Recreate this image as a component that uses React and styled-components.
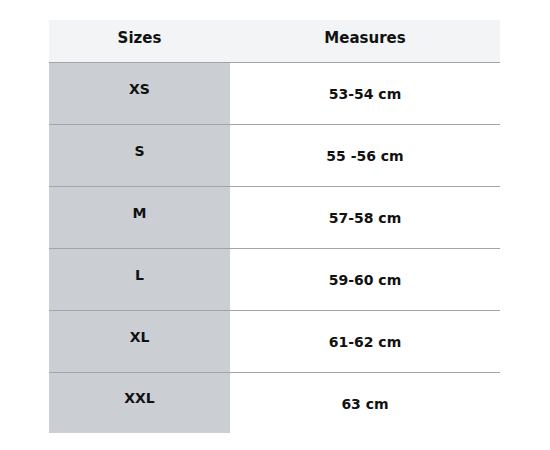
import React from "react";
import styled, { createGlobalStyle } from "styled-components";

const Global = createGlobalStyle`
  html, body { margin: 0; padding: 0; background: #fff; }
  body { font-family: "DejaVu Sans", "Liberation Sans", sans-serif; }
`;

const Page = styled.div`
  width: 550px;
  height: 450px;
  padding: 20px 0 0 49px;
  box-sizing: border-box;
`;

const Table = styled.div`
  width: 451px;
  display: grid;
  grid-template-columns: 181px 270px;
`;

const HeadCell = styled.div`
  height: 43px;
  background: #f3f4f6;
  border-bottom: 1px solid #a4a4a4;
  display: flex;
  align-items: center;
  justify-content: center;
  padding-bottom: 6px;
  box-sizing: border-box;
  font-weight: bold;
  font-size: 15px;
  color: #111;
`;

const Cell = styled.div`
  height: ${(p) => (p.$last ? 60 : 62)}px;
  box-sizing: border-box;
  border-bottom: ${(p) => (p.$last ? "none" : "1px solid #a4a4a4")};
  background: ${(p) => (p.$size ? "#cbced3" : "#fff")};
  display: flex;
  align-items: center;
  justify-content: center;
  padding-bottom: ${(p) => (p.$size ? 10 : 0)}px;
  padding-top: ${(p) => (p.$size ? 0 : 1)}px;
  font-weight: bold;
  font-size: 14px;
  color: #111;
`;

const rows = [
  ["XS", "53-54 cm"],
  ["S", "55 -56 cm"],
  ["M", "57-58 cm"],
  ["L", "59-60 cm"],
  ["XL", "61-62 cm"],
  ["XXL", "63 cm"],
];

export default function App() {
  return (
    <>
      <Global />
      <Page>
        <Table>
          <HeadCell>Sizes</HeadCell>
          <HeadCell>Measures</HeadCell>
          {rows.map(([s, m], i) => (
            <React.Fragment key={s}>
              <Cell $size $last={i === rows.length - 1}>{s}</Cell>
              <Cell $last={i === rows.length - 1}>{m}</Cell>
            </React.Fragment>
          ))}
        </Table>
      </Page>
    </>
  );
}
